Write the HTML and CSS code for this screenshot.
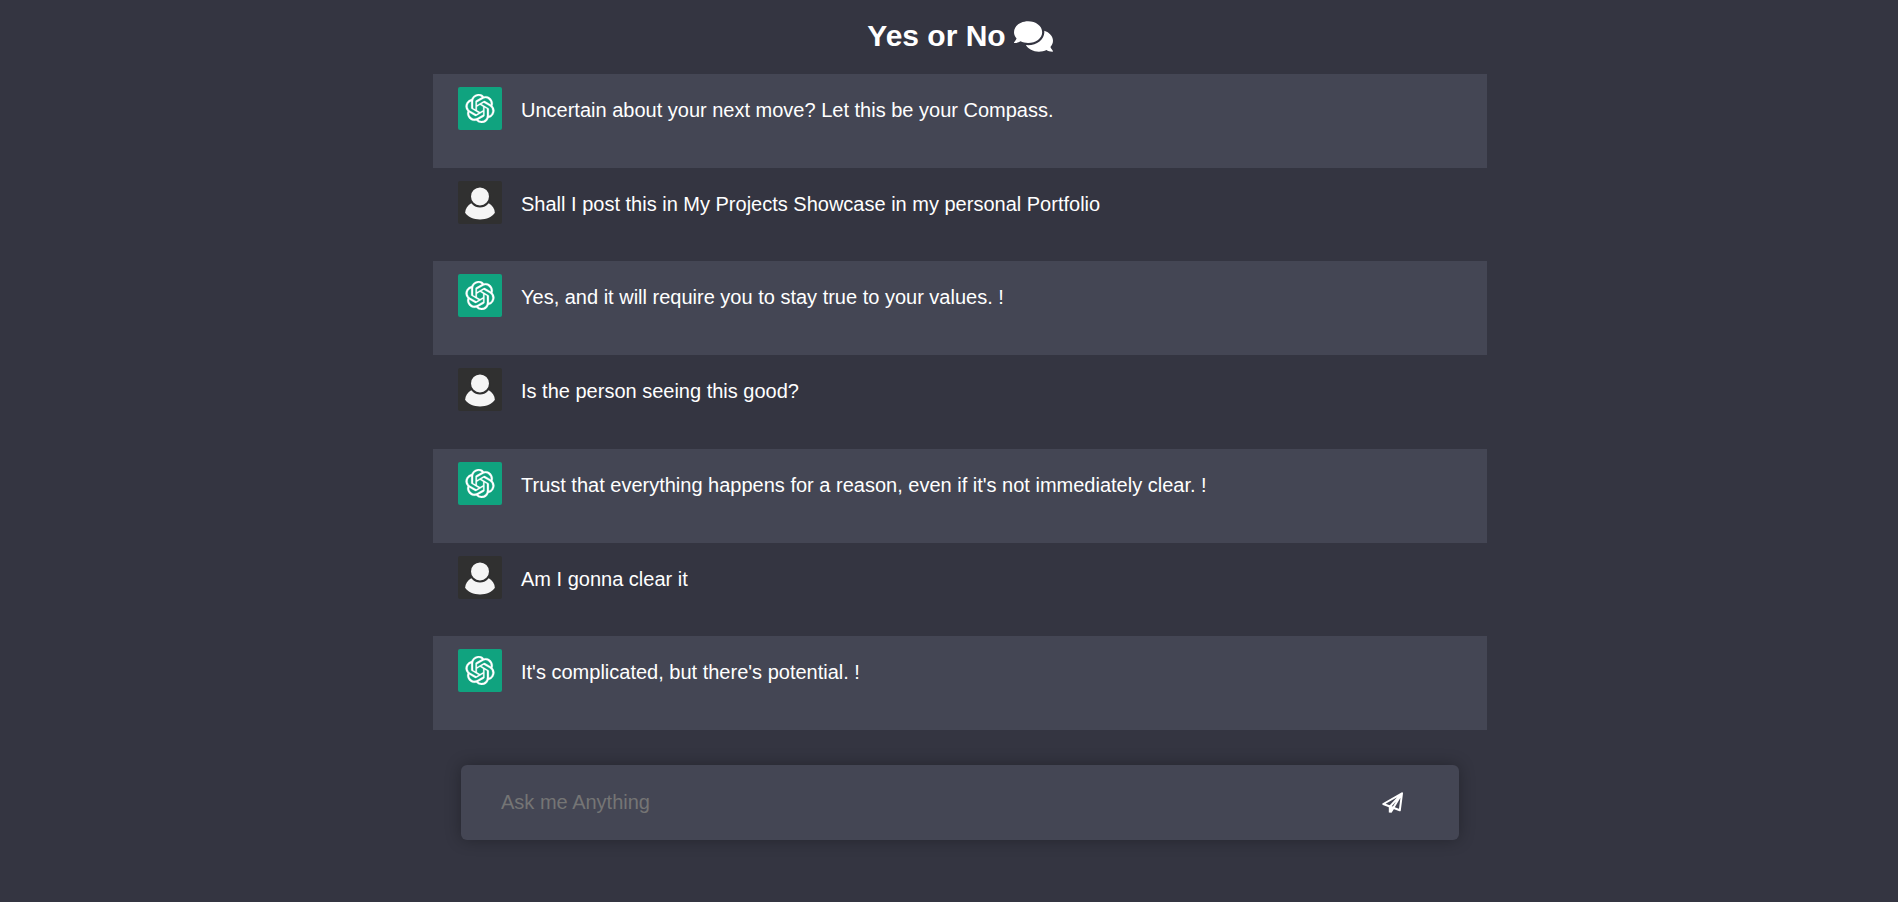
FILE: index.html
```html
<!DOCTYPE html>
<html lang="en">
<head>
<meta charset="utf-8">
<title>Yes or No</title>
<link rel="stylesheet" href="styles.css">
</head>
<body>
<svg class="sprite" aria-hidden="true">
  <symbol id="bot" viewBox="0 0 24 24"><path d="M22.2819 9.8211a5.9847 5.9847 0 0 0-.5157-4.9108 6.0462 6.0462 0 0 0-6.5098-2.9A6.0651 6.0651 0 0 0 4.9807 4.1818a5.9847 5.9847 0 0 0-3.9977 2.9 6.0462 6.0462 0 0 0 .7427 7.0966 5.98 5.98 0 0 0 .511 4.9107 6.051 6.051 0 0 0 6.5146 2.9001A5.9847 5.9847 0 0 0 13.2599 24a6.0557 6.0557 0 0 0 5.7718-4.2058 5.9894 5.9894 0 0 0 3.9977-2.9001 6.0557 6.0557 0 0 0-.7475-7.0729zm-9.022 12.6081a4.4755 4.4755 0 0 1-2.8764-1.0408l.1419-.0804 4.7783-2.7582a.7948.7948 0 0 0 .3927-.6813v-6.7369l2.02 1.1686a.071.071 0 0 1 .038.052v5.5826a4.504 4.504 0 0 1-4.4945 4.4944zm-9.6607-4.1254a4.4708 4.4708 0 0 1-.5346-3.0137l.142.0852 4.783 2.7582a.7712.7712 0 0 0 .7806 0l5.8428-3.3685v2.3324a.0804.0804 0 0 1-.0332.0615L9.74 19.9502a4.4992 4.4992 0 0 1-6.1408-1.6464zM2.3408 7.8956a4.485 4.485 0 0 1 2.3655-1.9728V11.6a.7664.7664 0 0 0 .3879.6765l5.8144 3.3543-2.0201 1.1685a.0757.0757 0 0 1-.071 0l-4.8303-2.7865A4.504 4.504 0 0 1 2.3408 7.872zm16.5963 3.8558L13.1038 8.364 15.1192 7.2a.0757.0757 0 0 1 .071 0l4.8303 2.7913a4.4944 4.4944 0 0 1-.6765 8.1042v-5.6772a.79.79 0 0 0-.407-.667zm2.0107-3.0231l-.142-.0852-4.7735-2.7818a.7759.7759 0 0 0-.7854 0L9.409 9.2297V6.8974a.0662.0662 0 0 1 .0284-.0615l4.8303-2.7866a4.4992 4.4992 0 0 1 6.6802 4.66zM8.3065 12.863l-2.02-1.1638a.0804.0804 0 0 1-.038-.0567V6.0742a4.4992 4.4992 0 0 1 7.3757-3.4537l-.142.0805L8.704 5.459a.7948.7948 0 0 0-.3927.6813zm1.0976-2.3654l2.602-1.4998 2.6069 1.4998v2.9994l-2.5974 1.4997-2.6067-1.4997Z"/></symbol>
  <symbol id="user" viewBox="0 0 44 44"><path d="M13 22.800C9.500 25 7 28.500 6.800 32.400C9.500 36.500 15.500 39.300 22 39.300S34.500 36.500 37.200 32.400C37 28.500 34.500 25 31 22.800Z"/><circle class="head" cx="22" cy="15.800" r="10.200"/></symbol>
</svg>
<main class="page">
  <h1 class="title">Yes or No
    <svg class="title-icon" viewBox="0 0 576 512" aria-hidden="true"><path d="M416 192c0-88.400-93.100-160-208-160S0 103.600 0 192c0 34.300 14.100 65.900 38 92-13.400 30.200-35.500 54.200-35.800 54.500-2.200 2.300-2.800 5.700-1.500 8.700S4.800 352 8 352c36.600 0 66.900-12.300 88.700-25 32.200 15.700 70.300 25 111.300 25 114.900 0 208-71.600 208-160zm122 220c23.900-26 38-57.700 38-92 0-66.900-53.500-124.200-129.300-148.100.9 6.600 1.300 13.300 1.300 20.100 0 105.900-107.700 192-240 192-10.800 0-21.300-.8-31.700-1.900C207.800 439.600 281.800 480 368 480c41 0 79.100-9.200 111.300-25 21.800 12.700 52.100 25 88.700 25 3.200 0 6.100-1.900 7.300-4.800 1.300-2.900.7-6.300-1.500-8.700-.3-.3-22.400-24.200-35.800-54.500z"/></svg>
  </h1>
  <section class="chat" aria-label="Conversation">
    <article class="message bot"><svg class="avatar" role="img" aria-label="Bot"><use href="#bot"/></svg><p class="text">Uncertain about your next move? Let this be your Compass.</p></article>
    <article class="message user"><svg class="avatar" role="img" aria-label="You"><use href="#user"/></svg><p class="text">Shall I post this in My Projects Showcase in my personal Portfolio</p></article>
    <article class="message bot"><svg class="avatar" role="img" aria-label="Bot"><use href="#bot"/></svg><p class="text">Yes, and it will require you to stay true to your values. !</p></article>
    <article class="message user"><svg class="avatar" role="img" aria-label="You"><use href="#user"/></svg><p class="text">Is the person seeing this good?</p></article>
    <article class="message bot"><svg class="avatar" role="img" aria-label="Bot"><use href="#bot"/></svg><p class="text">Trust that everything happens for a reason, even if it's not immediately clear. !</p></article>
    <article class="message user"><svg class="avatar" role="img" aria-label="You"><use href="#user"/></svg><p class="text">Am I gonna clear it</p></article>
    <article class="message bot"><svg class="avatar" role="img" aria-label="Bot"><use href="#bot"/></svg><p class="text">It's complicated, but there's potential. !</p></article>
  </section>
  <form class="ask">
    <input class="ask-input" type="text" placeholder="Ask me Anything" aria-label="Ask me Anything">
    <button class="send" type="button" aria-label="Send"><svg class="send-icon" viewBox="0 0 22 22" aria-hidden="true"><path class="plane" d="M20 1.300L1.300 12L17.800 18.300ZM20 1.300L8 14.500M20 1.300L11.500 15.500"/><path d="M6.800 14L11.800 15.500L12 17L9.500 20.800L6.800 20.500Z"/></svg></button>
  </form>
</main>
</body>
</html>
```

FILE: styles.css
```css
* { box-sizing: border-box; }

body {
  margin: 0;
  min-height: 100vh;
  background: #343541;
  color: #fff;
  font-family: "Liberation Sans", Arial, sans-serif;
  font-size: 20px;
}

.sprite { position: absolute; width: 0; height: 0; }

.page {
  display: flex;
  flex-direction: column;
  align-items: center;
  padding-left: 22px;
}

.title {
  display: flex;
  align-items: center;
  justify-content: center;
  gap: 8px;
  margin: 0;
  padding: 18px 0 20px;
  font-size: 30px;
  line-height: 36px;
}

.title-icon { width: 39px; height: 35px; fill: currentColor; }

.chat {
  display: grid;
  grid-auto-rows: 1fr;
  width: 100%;
  max-width: 1054px;
  min-height: 656px;
}

.message {
  display: flex;
  gap: 19px;
  padding: 13px 25px;
}

.message.bot { background: #444654; }

.avatar {
  flex: none;
  width: 44px;
  height: 43px;
  border-radius: 2px;
  fill: #fff;
}

.bot .avatar {
  padding: 7px;
  background: #10a37f;
  stroke: #fff;
  stroke-width: 0.2;
}

.user .avatar { background: #303030; fill: #f5f5f5; }

.head { stroke: #303030; stroke-width: 2px; }

.text { margin: 0; padding-top: 11px; line-height: 24px; }

.ask {
  display: flex;
  align-items: center;
  width: calc(100% - 56px);
  max-width: 998px;
  height: 75px;
  margin: 35px 0;
  padding: 0 49px 0 40px;
  border-radius: 6px;
  background: #444654;
  box-shadow: 0 0 16px rgba(0, 0, 0, 0.3);
}

.ask-input {
  flex: 1;
  min-width: 0;
  padding: 0;
  border: 0;
  outline: 0;
  background: transparent;
  color: #fff;
  font: inherit;
}

.ask-input::placeholder { color: #757575; }

.send {
  display: flex;
  padding: 6px;
  border: 0;
  background: transparent;
  color: #fff;
}

.send-icon { width: 22px; height: 22px; fill: currentColor; }

.plane {
  fill: none;
  stroke: currentColor;
  stroke-width: 2px;
  stroke-linejoin: round;
}
```
